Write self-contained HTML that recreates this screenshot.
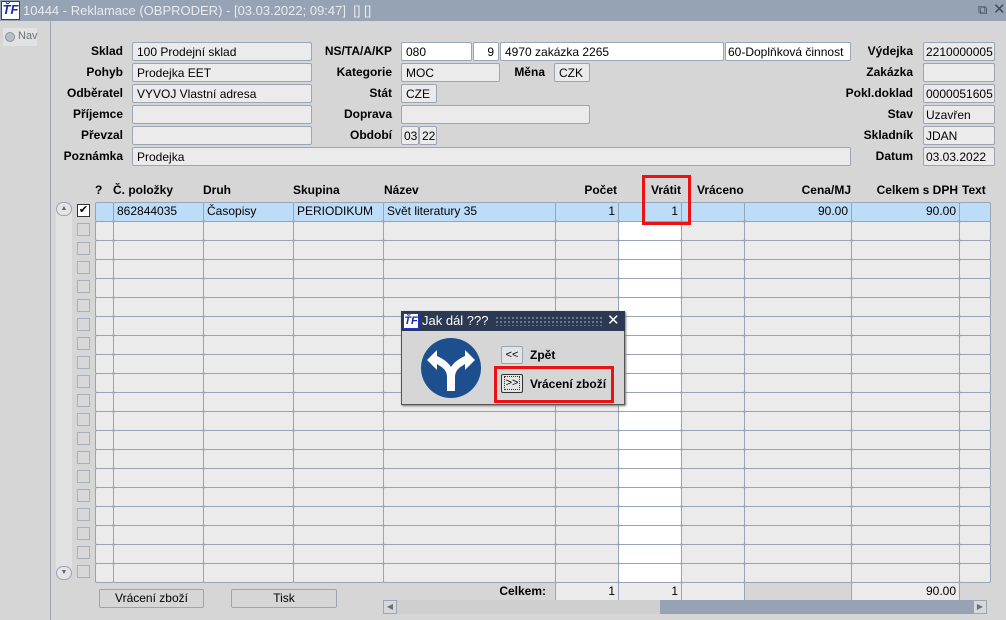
<!DOCTYPE html>
<html><head><meta charset="utf-8">
<style>
*{box-sizing:border-box;margin:0;padding:0}
body{width:1006px;height:620px;overflow:hidden;background:#d6d6d6;font-family:"Liberation Sans",Arial,sans-serif;font-size:12px;color:#000;position:relative}
.a{position:absolute}
.lb{position:absolute;font-weight:bold;text-align:right;font-size:12px;line-height:19px}
.f{position:absolute;height:19px;border:1px solid #9aa5b5;border-radius:2px;background:#ebebeb;line-height:18px;padding-left:4px;font-size:12px;white-space:nowrap;overflow:hidden}
.w{background:#fff}
.r{text-align:right;padding-right:4px}
.c{position:absolute;height:20px;border:1.5px solid #98a4b6;border-radius:2px;background:#ebebeb;line-height:17px;font-size:12px;padding:0 3px;white-space:nowrap;overflow:hidden}
.h{position:absolute;top:183px;font-weight:bold;font-size:12px}
.btn{position:absolute;height:19px;border:1px solid #9aa5b5;border-radius:2px;background:#d6d6d6;text-align:center;line-height:17px;font-size:12px}
</style></head><body>
<!-- title -->
<div class="a" style="left:0;top:0;width:1006px;height:21px;background:#95a3b5"></div>
<div class="a" style="left:1px;top:1px;width:19px;height:19px;background:#fff;border:1px solid #2233cc;color:#1a2aa8;font-weight:bold;font-style:italic;font-size:13px;line-height:16px;text-align:center">ŤF</div>
<div class="a" style="left:23px;top:3px;color:#e8ebf0;font-size:13px">10444 - Reklamace (OBPRODER) - [03.03.2022; 09:47]&nbsp; [] []</div>
<div class="a" style="left:978px;top:2px;color:#3d4a5c;font-size:13px">⧉</div>
<div class="a" style="left:993px;top:0px;color:#3d4a5c;font-size:15px">✕</div>
<!-- nav -->
<div class="a" style="left:0;top:21px;width:51px;height:599px;border-right:1px solid #9aa5b5;background:#d6d6d6"></div>
<div class="a" style="left:3px;top:28px;width:34px;height:18px;background:#e2e2e2"></div>
<div class="a" style="left:5px;top:32px;width:10px;height:10px;border-radius:50%;background:#b8bec6;border:1px solid #8a93a0"></div>
<div class="a" style="left:18px;top:30px;color:#6a7380;font-size:11px">Nav</div>

<!-- left labels -->
<div class="lb" style="left:50px;width:73px;top:42px">Sklad</div>
<div class="lb" style="left:50px;width:73px;top:63px">Pohyb</div>
<div class="lb" style="left:50px;width:73px;top:84px">Odběratel</div>
<div class="lb" style="left:50px;width:73px;top:105px">Příjemce</div>
<div class="lb" style="left:50px;width:73px;top:126px">Převzal</div>
<div class="lb" style="left:50px;width:73px;top:147px">Poznámka</div>
<div class="f" style="left:132px;top:42px;width:180px">100 Prodejní sklad</div>
<div class="f" style="left:132px;top:63px;width:180px">Prodejka EET</div>
<div class="f" style="left:132px;top:84px;width:180px">VYVOJ Vlastní adresa</div>
<div class="f" style="left:132px;top:105px;width:180px"></div>
<div class="f" style="left:132px;top:126px;width:180px"></div>
<div class="f" style="left:132px;top:147px;width:719px">Prodejka</div>
<!-- middle -->
<div class="lb" style="left:300px;width:92px;top:42px">NS/TA/A/KP</div>
<div class="lb" style="left:300px;width:92px;top:63px">Kategorie</div>
<div class="lb" style="left:300px;width:92px;top:84px">Stát</div>
<div class="lb" style="left:300px;width:92px;top:105px">Doprava</div>
<div class="lb" style="left:300px;width:92px;top:126px">Období</div>
<div class="f w" style="left:401px;top:42px;width:71px">080</div>
<div class="f w r" style="left:473px;top:42px;width:26px">9</div>
<div class="f w" style="left:500px;top:42px;width:224px">4970 zakázka 2265</div>
<div class="f w" style="left:725px;top:42px;width:126px;padding-left:2px">60-Doplňková činnost</div>
<div class="f" style="left:401px;top:63px;width:99px">MOC</div>
<div class="lb" style="left:500px;width:45px;top:63px">Měna</div>
<div class="f" style="left:554px;top:63px;width:36px">CZK</div>
<div class="f" style="left:401px;top:84px;width:36px">CZE</div>
<div class="f" style="left:401px;top:105px;width:189px"></div>
<div class="f" style="left:401px;top:126px;width:18px;padding-left:2px">03</div>
<div class="f" style="left:419px;top:126px;width:18px;padding-left:2px">22</div>
<!-- right -->
<div class="lb" style="left:820px;width:93px;top:42px">Výdejka</div>
<div class="lb" style="left:820px;width:93px;top:63px">Zakázka</div>
<div class="lb" style="left:820px;width:93px;top:84px">Pokl.doklad</div>
<div class="lb" style="left:820px;width:93px;top:105px">Stav</div>
<div class="lb" style="left:820px;width:93px;top:126px">Skladník</div>
<div class="lb" style="left:820px;width:93px;top:147px">Datum</div>
<div class="f" style="left:923px;top:42px;width:72px;padding-left:2px">2210000005</div>
<div class="f" style="left:923px;top:63px;width:72px"></div>
<div class="f" style="left:923px;top:84px;width:72px;padding-left:2px">0000051605</div>
<div class="f" style="left:923px;top:105px;width:72px;padding-left:2px">Uzavřen</div>
<div class="f" style="left:923px;top:126px;width:72px;padding-left:2px">JDAN</div>
<div class="f" style="left:923px;top:147px;width:72px;padding-left:2px">03.03.2022</div>

<!-- grid headers -->
<div class="h" style="left:95px">?</div>
<div class="h" style="left:113px">Č. položky</div>
<div class="h" style="left:203px">Druh</div>
<div class="h" style="left:293px">Skupina</div>
<div class="h" style="left:384px">Název</div>
<div class="h" style="left:555px;width:62px;text-align:right">Počet</div>
<div class="h" style="left:618px;width:63px;text-align:right">Vrátit</div>
<div class="h" style="left:697px">Vráceno</div>
<div class="h" style="left:744px;width:107px;text-align:right">Cena/MJ</div>
<div class="h" style="left:851px;width:107px;text-align:right">Celkem s DPH</div>
<div class="h" style="left:962px">Text</div>

<!-- vertical scrollbar -->
<div class="a" style="left:56px;top:202px;width:16px;height:378px;background:#e2e2e2;border-radius:8px"></div>
<div class="a" style="left:56px;top:202px;width:16px;height:14px;border:1px solid #9aa5b5;border-radius:8px;background:#e4e4e4;font-size:7px;color:#666;text-align:center;line-height:11px">▲</div>
<div class="a" style="left:56px;top:566px;width:16px;height:14px;border:1px solid #9aa5b5;border-radius:8px;background:#e4e4e4;font-size:7px;color:#666;text-align:center;line-height:12px">▼</div>

<div id="grid"></div>

<!-- totals -->
<div class="lb" style="left:470px;width:76px;top:582px">Celkem:</div>
<div class="c r" style="left:555px;top:582px;width:64px;text-align:right">1</div>
<div class="c r" style="left:618px;top:582px;width:64px;text-align:right">1</div>
<div class="c" style="left:681px;top:582px;width:64px"></div>
<div class="c r" style="left:851px;top:582px;width:109px;text-align:right">90.00</div>
<!-- hscroll -->
<div class="a" style="left:383px;top:600px;width:604px;height:14px;background:#95a3b5"></div>
<div class="a" style="left:383px;top:600px;width:277px;height:14px;background:#cfcfcf"></div>
<div class="a" style="left:383px;top:600px;width:14px;height:14px;background:#d8d8d8;border:1px solid #9aa5b5;font-size:8px;color:#6a7380;line-height:12px;text-align:center">◀</div>
<div class="a" style="left:973px;top:600px;width:14px;height:14px;background:#d8d8d8;border:1px solid #9aa5b5;font-size:8px;color:#6a7380;line-height:12px;text-align:center">▶</div>
<!-- buttons -->
<div class="btn" style="left:99px;top:589px;width:105px">Vrácení zboží</div>
<div class="btn" style="left:231px;top:589px;width:106px">Tisk</div>

<!-- red box on Vrátit -->
<div class="a" style="left:642px;top:175px;width:49px;height:50px;border:3px solid #ee1111"></div>

<!-- dialog -->
<div class="a" style="left:401px;top:311px;width:224px;height:94px;background:#d6d6d6;border:1px solid #555;box-shadow:1px 1px 2px #777"></div>
<div class="a" style="left:401px;top:311px;width:224px;height:20px;background:#2b3a52"></div>
<div class="a" style="left:403px;top:313px;width:16px;height:16px;background:#fff;border:1px solid #2233cc;color:#1a2aa8;font-weight:bold;font-style:italic;font-size:11px;line-height:14px;text-align:center">ŤF</div>
<div class="a" style="left:422px;top:313px;color:#fff;font-size:13px">Jak dál ???</div>
<div class="a" style="left:495px;top:316px;width:108px;height:10px;background-image:radial-gradient(#7d8ba0 1px,transparent 1px);background-size:4px 4px"></div>
<div class="a" style="left:607px;top:311px;color:#fff;font-size:15px">✕</div>
<svg class="a" style="left:420px;top:337px" width="62" height="62" viewBox="0 0 62 62">
<circle cx="31" cy="31" r="30" fill="#1d4f8e"/>
<path d="M27 54 L27 40 Q27 33 20 29 L17 27 L17 33 L7 23 L17 13 L17 19 L21 21 Q28 25 31 30 Q34 25 41 21 L45 19 L45 13 L55 23 L45 33 L45 27 L42 29 Q35 33 35 40 L35 54 Z" fill="#fff"/>
</svg>
<div class="btn" style="left:501px;top:346px;width:22px;height:18px;background:#e4e4e4;line-height:16px;font-size:11px">&lt;&lt;</div>
<div class="a" style="left:530px;top:348px;font-weight:bold;font-size:12px">Zpět</div>
<div class="btn" style="left:501px;top:374px;width:22px;height:19px;background:#e4e4e4;line-height:17px;font-size:11px;border:1px solid #333"><span style="border:1px dotted #333;padding:0 1px">&gt;&gt;</span></div>
<div class="a" style="left:530px;top:377px;font-weight:bold;font-size:12px">Vrácení zboží</div>
<div class="a" style="left:494px;top:366px;width:120px;height:37px;border:3px solid #ee1111"></div>

<script>
var cols=[[95,18],[113,90],[203,90],[293,90],[383,172],[555,63],[618,63],[681,63],[744,107],[851,108],[959,31]];
var h='';
for(var i=0;i<20;i++){
 var y=202+i*19;
 var sel=i==0;
 h+='<div class="a" style="left:77px;top:'+(y+2)+'px;width:13px;height:13px;border:1px solid '+(sel?'#333':'#a8b0bc')+';background:'+(sel?'#fff':'#d8d8d8')+';font-size:11px;line-height:11px;text-align:center">'+(sel?'✔':'')+'</div>';
 for(var j=0;j<cols.length;j++){
  var bg=sel?'#bcdcf8':(j==6?'#fff':'#ebebeb');
  var t='',al='left';
  if(sel){t=['','862844035','Časopisy','PERIODIKUM','Svět literatury 35','1','1','','90.00','90.00',''][j];if(j==5||j==6||j==8||j==9)al='right';}
  h+='<div class="c" style="left:'+cols[j][0]+'px;top:'+y+'px;width:'+(cols[j][1]+1)+'px;background:'+bg+';text-align:'+al+'">'+t+'</div>';
 }
}
document.getElementById('grid').innerHTML=h;
</script>
</body></html>
